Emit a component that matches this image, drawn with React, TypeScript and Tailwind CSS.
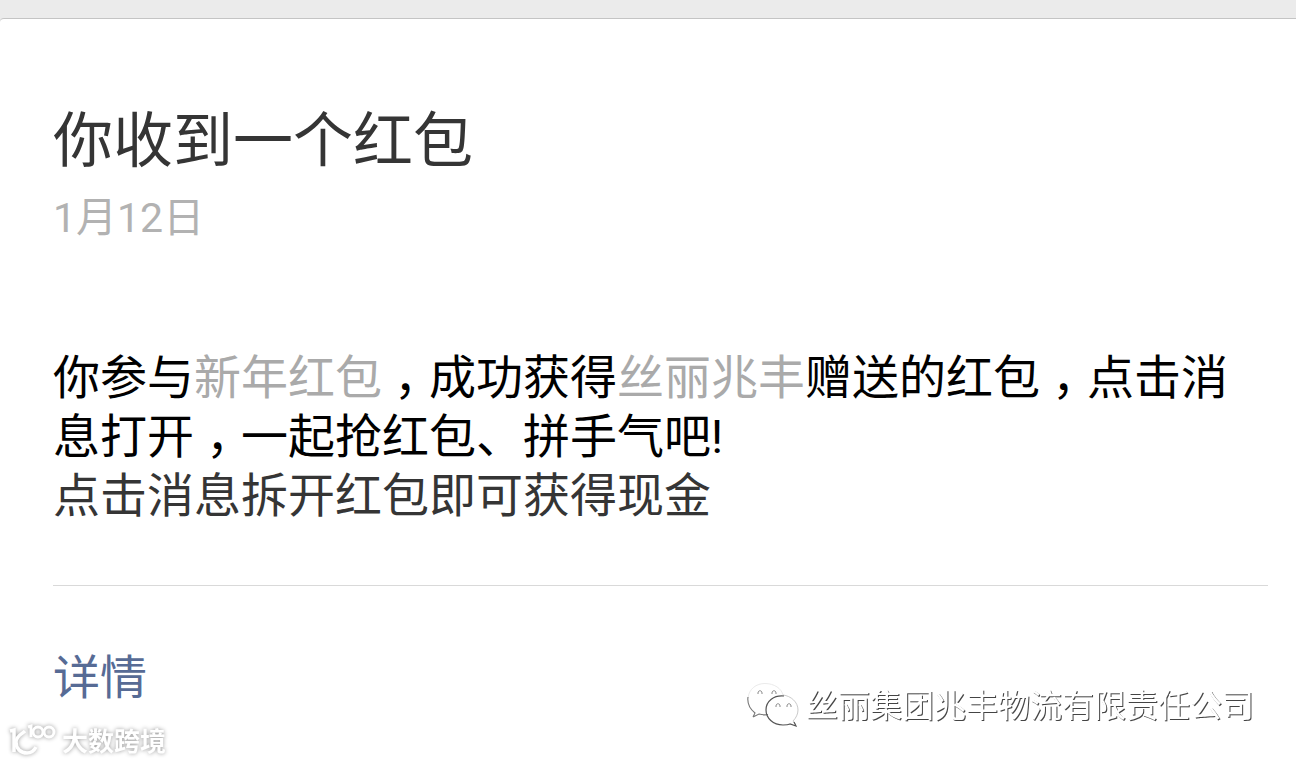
function Comma() {
  return <span className="-mr-3 pl-3">，</span>;
}

function ChatBubbles() {
  return (
    <svg viewBox="0 0 54 46" className="h-[46px] w-[54px] shrink-0" fill="none" aria-hidden="true">
      <path d="M2 15C3 6 10 0.500 19 0.500c9 0 17 5 18 12" stroke="#e4e4e4" strokeWidth="0.8" />
      <path d="M2 14c-1 7 2 12 7 16l-2 4M7 34l6-3c4 1 7 1 9 0.500" stroke="#777" strokeWidth="1.100" />
      <path d="M37 12c8 1 15 7 15 15 0 4-2 8-5 11l3 4" stroke="#c4c4c4" strokeWidth="0.9" />
      <path d="M38 13c-10-1-18 5-18 14 0 8 7 15 17 15 3 0 5 0 7-1l6 2-2-4" stroke="#555" strokeWidth="1.200" />
      <path d="M12 11v-1c0-3 4-3 4 0v1M26 11v-1c0-3 4-3 4 0v1M30 24v-1c0-3 4-3 4 0v1M41 24v-1c0-3 4-3 4 0v1" stroke="#888" strokeWidth="1" />
    </svg>
  );
}

function HundredMark() {
  return (
    <svg
      viewBox="0 0 50 36"
      className="h-9 w-[50px] shrink-0 overflow-visible drop-shadow-[0_0_2px_#999999]"
      fill="none"
      stroke="#fff"
      strokeWidth="3"
      aria-hidden="true"
    >
      <path d="M2 7l4-1v22" strokeWidth="3.500" />
      <path d="M17 7c-3 3-9 5-9 11 0 7 5 11 11 11 4 0 7-2 9-6" strokeWidth="3.500" />
      <path d="M20 3l3-1v11" />
      <circle cx="30" cy="8" r="5" />
      <circle cx="41" cy="8" r="5" />
    </svg>
  );
}

export default function App() {
  return (
    <div className="relative min-h-screen bg-[#ebebeb] pt-[18px] font-['Roboto','Noto_Sans_CJK_SC',sans-serif]">
      <main className="min-h-[calc(100vh-18px)] rounded-tl border-t border-[#c4c4c4] bg-white pt-[88px] pr-7 pb-14 pl-[53px]">
        <h1 className="text-[60px] leading-[70px] text-[#353535]">你收到一个红包</h1>
        <time className="block pt-[15px] text-[41px] leading-[52px] text-[#b2b2b2]">1月12日</time>

        <div className="mt-[104px] text-[47px] leading-[59px]">
          <p className="text-black">
            你参与<span className="text-[#aaaaaa]">新年红包</span>
            <Comma />成功获得<span className="text-[#aaaaaa]">丝丽兆丰</span>赠送的红包
            <Comma />点击消息打开
            <Comma />一起抢红包、拼手气吧!
          </p>
          <p className="text-[#353535]">点击消息拆开红包即可获得现金</p>
        </div>

        <hr className="mt-[60px] border-[#d9d9d9]" />
        <a href="#details" className="mt-[62px] inline-block text-[47px] leading-[59px] text-[#576b95]">
          详情
        </a>
      </main>

      <div className="absolute right-[42px] bottom-[34px] flex items-center gap-1.5">
        <ChatBubbles />
        <span className="text-[32px] leading-[46px] text-white drop-shadow-[1px_1px_0_#444444]">
          丝丽集团兆丰物流有限责任公司
        </span>
      </div>

      <div className="absolute bottom-[3px] left-[8px] flex items-center gap-1">
        <HundredMark />
        <span className="text-[26px] leading-9 font-bold text-white drop-shadow-[0_0_2px_#999999]">
          大数跨境
        </span>
      </div>
    </div>
  );
}
